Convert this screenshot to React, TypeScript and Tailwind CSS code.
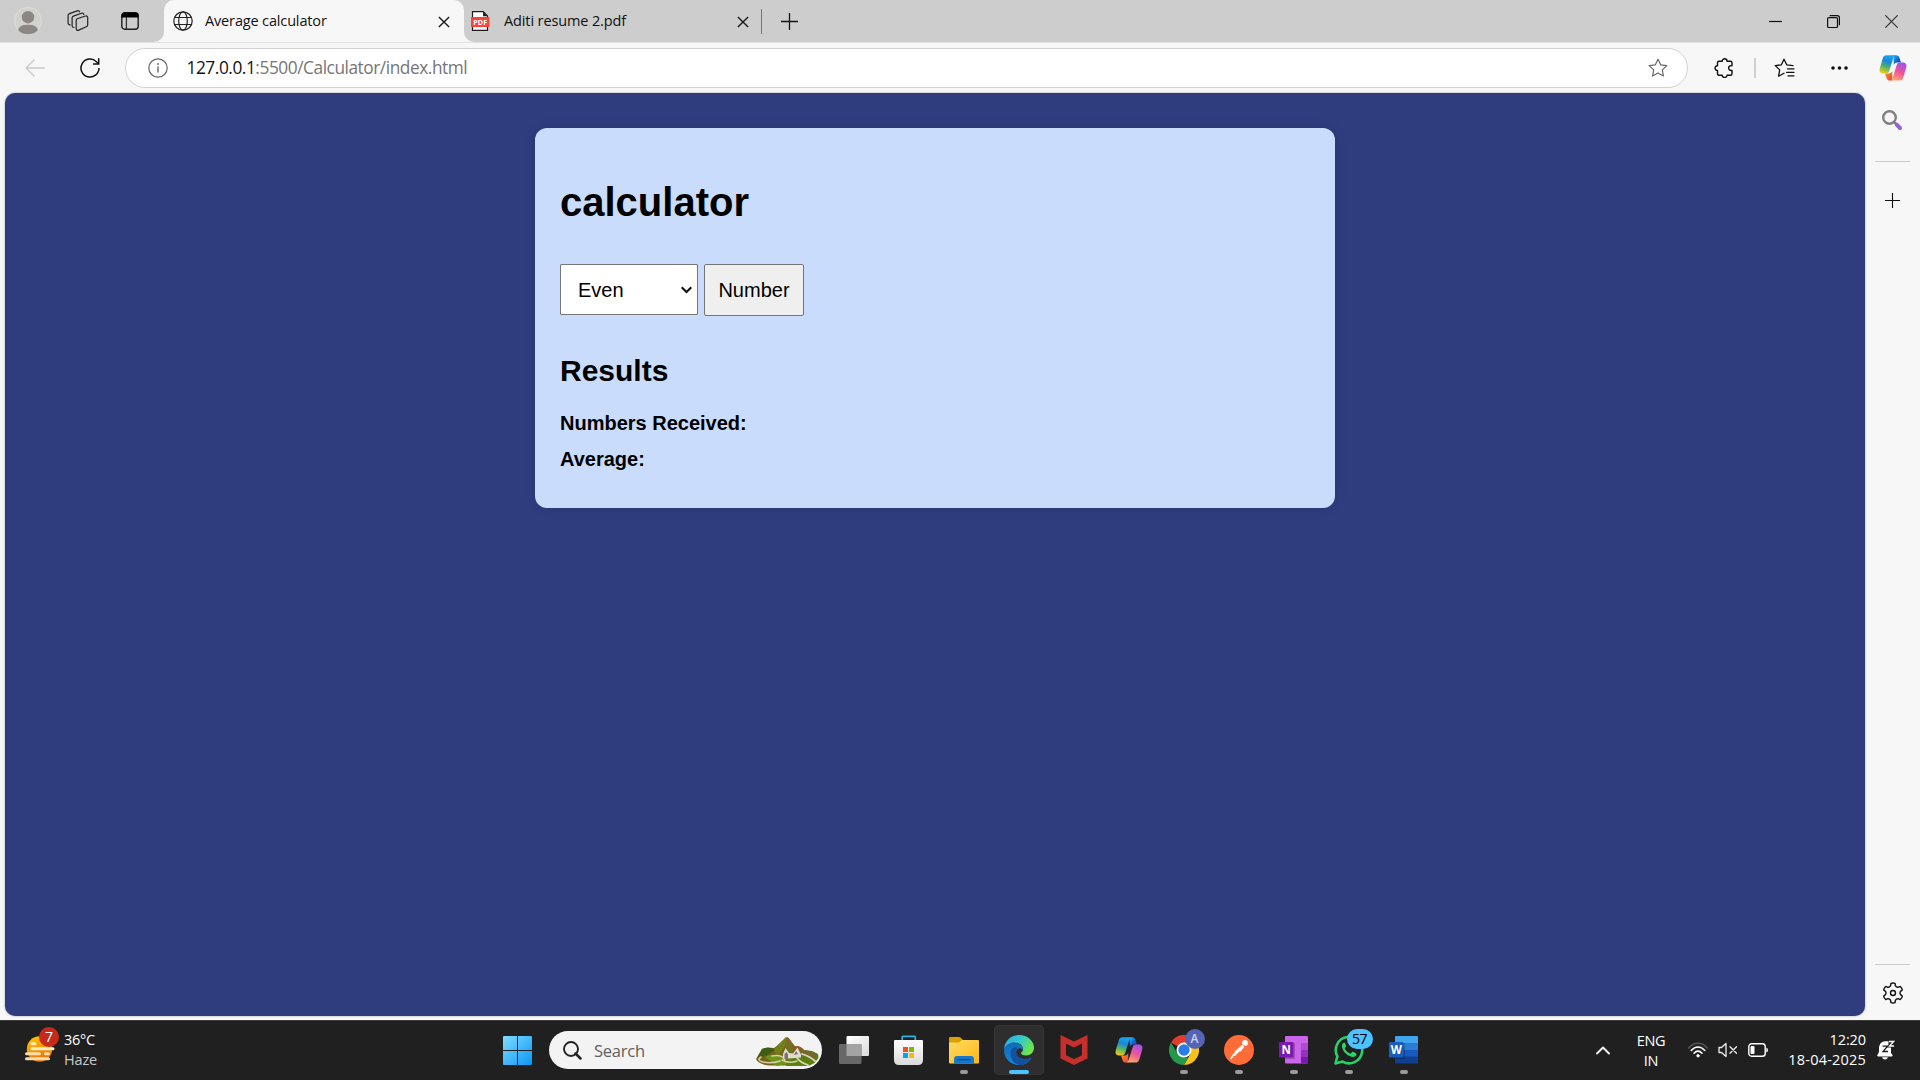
import React from "react";

const UI = "font-['Open_Sans','Noto_Sans',sans-serif]";

function Close({ className = "" }: { className?: string }) {
  return (
    <svg width="12" height="12" viewBox="0 0 12 12" className={"shrink-0 " + className} fill="none" stroke="#1a1a1a" strokeWidth="1.400">
      <path d="M.9.9 11.1 11.1M11.1.9.9 11.1" />
    </svg>
  );
}

function Plus({ size, className = "" }: { size: number; className?: string }) {
  return (
    <svg width={size} height={size} viewBox="0 0 17 17" className={"shrink-0 " + className} fill="none" stroke="#111" strokeWidth="1.3">
      <path d="M8.5 0v17M0 8.5h17" />
    </svg>
  );
}

function Copilot({ id, className = "" }: { id: string; className?: string }) {
  return (
    <svg width="28" height="26" viewBox="0 0 28 26" className={"shrink-0 " + className}>
      <defs>
        <linearGradient id={id + "a"} x1="0.6" y1="0" x2="0.3" y2="1">
          <stop offset="0" stopColor="#19a9f4" />
          <stop offset=".35" stopColor="#1b86d8" />
          <stop offset=".65" stopColor="#4fb56a" />
          <stop offset="1" stopColor="#f2cb12" />
        </linearGradient>
        <linearGradient id={id + "b"} x1="0.7" y1="0" x2="0.3" y2="1">
          <stop offset="0" stopColor="#a052ee" />
          <stop offset=".5" stopColor="#ee5498" />
          <stop offset="1" stopColor="#ffa96b" />
        </linearGradient>
        <linearGradient id={id + "c"} x1="0" y1="0" x2="1" y2="1">
          <stop offset="0" stopColor="#25b6f6" />
          <stop offset=".6" stopColor="#1556c8" />
          <stop offset="1" stopColor="#1640b4" />
        </linearGradient>
        <linearGradient id={id + "d"} x1="0" y1="0" x2="1" y2="1">
          <stop offset="0" stopColor="#f6a21c" />
          <stop offset="1" stopColor="#ea3e3e" />
        </linearGradient>
      </defs>
      <path d="M14.5.3h2.6c1.900 0 2.800.9 3.400 2.600l1.500 4.600h-3.600c-2 0-3 .8-3.600 2.600Z" fill={`url(#${id}c)`} />
      <path d="M13.400 25.600h-2.500c-1.900 0-2.800-.9-3.400-2.600L6 18.400h3.600c2 0 3-.8 3.600-2.600Z" fill={`url(#${id}d)`} />
      <path d="M7.600.3h9.300c-1.400.2-2 1-2.500 2.500l-4.100 13c-.6 1.800-1.600 2.600-3.500 2.600H4C1 18.400 0 16 .8 13.200L3.700 3.400C4.300 1.300 5.400.3 7.600.3Z" fill={`url(#${id}a)`} />
      <path d="M20.400 25.600h-9.300c1.400-.2 2-1 2.500-2.500l4.100-13c.6-1.800 1.600-2.600 3.500-2.600H24c3 0 4 2.400 3.200 5.200l-2.900 9.800c-.6 2.100-1.700 3.100-3.900 3.100Z" fill={`url(#${id}b)`} />
    </svg>
  );
}

const STAR = "M10 1.200l2.650 5.600 6.150.85-4.500 4.250 1.100 6.100L10 15.050 4.600 18l1.100-6.100L1.200 7.650l6.150-.85Z";

function gearOutline(c: number) {
  const pt = (r: number, deg: number) => {
    const a = (deg * Math.PI) / 180;
    return `${(c + r * Math.sin(a)).toFixed(2)} ${(c - r * Math.cos(a)).toFixed(2)}`;
  };
  let d = "";
  for (let t = 0; t < 360; t += 60) {
    d += `${t === 0 ? "M" : "L"}${pt(9.8, t - 12)}Q${pt(10.3, t)} ${pt(9.8, t + 12)}L${pt(7.700, t + 18)}Q${pt(6.500, t + 30)} ${pt(7.700, t + 42)}`;
  }
  return d + "Z";
}

function TabStrip() {
  return (
    <div className="flex h-[42px] shrink-0 bg-[#f7f7f7]">
      <div className="flex w-[164px] items-center rounded-br-[10px] bg-[#cdcdcd]">
        <svg width="28" height="28" viewBox="0 0 28 28" className="ml-[14px]">
          <circle cx="14" cy="14" r="13.300" fill="#d2d1ce" stroke="#dedbd5" strokeWidth="1.200" />
          <circle cx="14" cy="10.200" r="6.200" fill="#8b8785" />
          <path d="M4 23c1.500-4 5-5.200 10-5.200S22.500 19 24 23c-2.500 3-6 4.300-10 4.300S6.500 26 4 23Z" fill="#8b8785" />
        </svg>
        <svg width="22" height="22" viewBox="0 0 22 22" className="ml-[25px]" fill="none" stroke="#222" strokeWidth="1.200" strokeLinejoin="round" strokeLinecap="round">
          <path d="M10.200 8.700 18.500 6c1.300-.4 2.200.3 2.200 1.500v7.300c0 1-.4 1.700-1.400 2l-7.600 3.300c-1.400.6-2.500 0-2.500-1.500v-8c0-1 .1-1.600 1-1.900Z" />
          <path d="M7 17.500c-1.200 0-1.900-.5-1.900-1.800V8c0-1 .4-1.500 1.300-1.900l8-2.800c1.200-.4 2 0 2.400 1.200" />
          <path d="M3.200 14.800c-1.300 0-2.100-.5-2.100-1.800V5.600c0-1 .4-1.600 1.400-2l7.700-2.700c1.100-.4 2 0 2.400 1" />
        </svg>
        <svg width="18" height="18" viewBox="0 0 18 18" className="ml-8" fill="none">
          <rect x=".8" y=".8" width="16.400" height="16.400" rx="3" stroke="#1d1d1d" strokeWidth="1.400" />
          <path d="M.5 5.500V3.500a3 3 0 0 1 3-3h11a3 3 0 0 1 3 3v2Z" fill="#000" />
          <path d="M5.400 5v12" stroke="#333" strokeWidth="1.300" />
        </svg>
      </div>
      <div className="w-[300px] bg-[linear-gradient(#cdcdcd_12px,#f7f7f7_12px)]">
        <div className="flex h-full items-center rounded-t-[10px] bg-[#f7f7f7]">
          <svg width="20" height="20" viewBox="0 0 20 20" className="ml-[9px]" fill="none" stroke="#222" strokeWidth="1.200">
            <circle cx="10" cy="10" r="9.200" />
            <ellipse cx="10" cy="10" rx="4.300" ry="9.200" />
            <path d="M1.700 6.500h16.600M1.700 13.500h16.600" />
          </svg>
          <span className={UI + " ml-3 w-[226px] text-[14.500px] leading-5 tracking-[-0.15px] text-[#111]"}>Average calculator</span>
          <Close className="mt-[2px] ml-[7px]" />
        </div>
      </div>
      <div className="flex flex-1 items-center rounded-bl-[10px] bg-[#cdcdcd]">
        <svg width="20" height="20" viewBox="0 0 20 20" className="ml-[6px]">
          <path d="M2.500.7h10.700l4.300 4.300v14.300h-15Z" fill="#fff" stroke="#1b1b1b" strokeWidth="1.200" />
          <path d="M13 .5v4.700h4.700Z" fill="#222" />
          <rect x="1" y="6" width="18.500" height="10" rx=".8" fill="#fb4243" />
          <text x="10.200" y="13.700" textAnchor="middle" fontSize="7.200" fontWeight="700" fill="#fff" fontFamily="Open Sans, sans-serif">PDF</text>
        </svg>
        <span className={UI + " ml-[14px] w-[226px] text-[14.500px] leading-5 tracking-[-0.12px] text-[#111]"}>Aditi resume 2.pdf</span>
        <Close className="mt-[2px] ml-[7px]" />
        <div className="ml-3 h-[25px] w-px bg-[#777]" />
        <Plus size={17} className="ml-[19px]" />
        <div className="flex-1" />
        <svg width="13" height="13" viewBox="0 0 13 13" stroke="#111" strokeWidth="1.200"><path d="M0 6.500h13" /></svg>
        <svg width="13" height="13" viewBox="0 0 13 13" className="ml-[45px] mt-[1px]" fill="none" stroke="#111" strokeWidth="1.200">
          <rect x=".6" y="2.600" width="9.900" height="9.900" rx="1.300" />
          <path d="M2.700.6h7.500c1.400 0 2.200.8 2.200 2.200v7.500" />
        </svg>
        <svg width="13" height="13" viewBox="0 0 13 13" className="mr-[22px] ml-[45px] mt-[1px]" fill="none" stroke="#333" strokeWidth="1.200"><path d="M.3.3l12.400 12.400M12.700.3.300 12.700" /></svg>
      </div>
    </div>
  );
}

function Toolbar() {
  return (
    <div className="flex h-[51px] shrink-0 items-center border-t border-[#e2e2e2] bg-[#f7f7f7]">
      <svg width="20" height="18" viewBox="0 0 20 18" className="ml-[25px]" fill="none" stroke="#c9c9c9" strokeWidth="1.300"><path d="M20 9H1M9.500.5 1 9l8.500 8.500" /></svg>
      <svg width="20" height="20" viewBox="0 0 20 20" className="ml-[35px]" fill="none" stroke="#111" strokeWidth="1.500">
        <path d="M19 10a9 9 0 1 1-2.600-6.300L18.300 5.500" /><path d="M18.700.3v5.600h-5.600" />
      </svg>
      <div className="ml-[25px] flex h-10 w-[1563px] items-center rounded-full border border-[#d2d2d2] bg-white">
        <svg width="20" height="20" viewBox="0 0 20 20" className="ml-[21.500px]" fill="none" stroke="#666" strokeWidth="1.200">
          <circle cx="10" cy="10" r="9.200" /><path d="M10 8.600v6" strokeWidth="1.400" /><circle cx="10" cy="6" r=".9" fill="#666" stroke="none" />
        </svg>
        <span className={UI + " ml-[19px] text-[17.300px] leading-6 tracking-[-0.450px] whitespace-nowrap text-[#767676]"}><span className="text-[#111]">127.0.0.1</span>:5500/Calculator/index.html</span>
        <div className="flex-1" />
        <svg width="20" height="20" viewBox="0 0 20 20" className="mr-[19.500px]" fill="none" stroke="#666" strokeWidth="1.200" strokeLinejoin="round"><path d={STAR} /></svg>
      </div>
      <svg width="20" height="20" viewBox="0 0 20 20" className="ml-[26px]" fill="none" stroke="#111" strokeWidth="1.400" strokeLinejoin="round">
        <path d="M8.200 3.200C8.200 0 13 0 13 3.200h3.500c.9 0 1.500.6 1.500 1.500v3c-4.500-1-4.500 5.600 0 4.700v3.300c0 .9-.6 1.500-1.500 1.500H13c0 3-4.800 3-4.800 0H5c-.9 0-1.500-.6-1.500-1.500v-3.200c-3.300 0-3.300-4.800 0-4.800v-3c0-.9.6-1.500 1.500-1.500Z" />
      </svg>
      <div className="ml-5 h-5 w-[2px] bg-[#d0d0d0]" />
      <svg width="21" height="20" viewBox="0 0 21 20" className="ml-[18px]" fill="none" stroke="#111" strokeWidth="1.300" strokeLinejoin="round" strokeLinecap="round">
        <path d="M19 7.600 12.700 6.800 10 1.200 7.400 6.800l-6.200.85 4.500 4.250L4.600 18.200l5.400-3" /><path d="M13.500 10.800h6.500M12.500 14.300H20M14 17.800h6" />
      </svg>
      <svg width="17" height="4" viewBox="0 0 17 4" className="ml-9" fill="#111"><circle cx="2" cy="2" r="1.800" /><circle cx="8.500" cy="2" r="1.800" /><circle cx="15" cy="2" r="1.800" /></svg>
      <Copilot id="top" className="ml-[31px]" />
    </div>
  );
}

function Page() {
  return (
    <main className="ml-[5px] h-[922.500px] w-[1860px] rounded-[10px] bg-[#2f3c7e] pt-[35px] font-['Liberation_Sans',Arial,sans-serif] text-black shadow-[0_0_2px_#0006]">
      <section className="mx-auto h-[380px] w-[800px] rounded-[12px] bg-[#cadcfc] px-[25px] pt-[51px] shadow-[0_0_12px_#0000001a]">
        <h1 className="text-[40px] leading-[46px] font-bold">calculator</h1>
        <div className="mt-[39px] flex gap-[6px] text-[20px]">
          <div className="flex h-[51px] w-[138px] items-center justify-between rounded-[1px] border border-[#767676] bg-white pr-[5px] pl-[17px]">
            <span className="leading-6">Even</span>
            <svg width="11" height="8" viewBox="0 0 11 8" fill="none" stroke="#111" strokeWidth="2.100"><path d="M.7 1.200 5.500 6l4.800-4.800" /></svg>
          </div>
          <button className="h-[52px] w-[100px] rounded-[2px] border border-[#767676] bg-[#efefef] leading-6">Number</button>
        </div>
        <h2 className="mt-[37px] text-[30px] leading-[35px] font-bold">Results</h2>
        <p className="mt-[17px] text-[20px] leading-9 font-bold">Numbers Received:</p>
        <p className="text-[20px] leading-9 font-bold">Average:</p>
      </section>
    </main>
  );
}

function Sidebar() {
  return (
    <aside className="flex h-[927px] flex-1 flex-col items-center">
      <svg width="22" height="22" viewBox="0 0 22 22" className="mt-4 mr-px" fill="none">
        <circle cx="8.500" cy="8.500" r="6.300" stroke="#808080" strokeWidth="2.400" />
        <path d="m13 13 3.300 3.300" stroke="#777" strokeWidth="2.200" />
        <path d="m15.700 15.700 3.300 3.300" stroke="#9560d2" strokeWidth="4" strokeLinecap="round" />
      </svg>
      <div className="mt-[30px] h-px w-[35px] bg-[#cbcbcb]" />
      <Plus size={15} className="mt-[31px]" />
      <div className="flex-1" />
      <div className="h-px w-[35px] bg-[#cbcbcb]" />
      <svg width="22" height="22" viewBox="0 0 22 22" className="mt-[17px] mb-4" fill="none" stroke="#111" strokeWidth="1.400" strokeLinejoin="round">
        <circle cx="11" cy="11" r="2.500" />
        <path d={gearOutline(11)} />
      </svg>
    </aside>
  );
}

function TaskItem({ children, running = false, active = false }: { children: React.ReactNode; running?: boolean; active?: boolean }) {
  return (
    <div className="flex w-[55px] justify-center">
      <div className={"relative flex h-[50px] w-[50px] items-center justify-center rounded-[5px] " + (active ? "bg-[#2e2e2e] ring-1 ring-[#363636] ring-inset" : "")}>
        {children}
        {active && <div className="absolute bottom-[1px] left-[15px] h-1 w-5 rounded-full bg-[#4cc2ff]" />}
        {running && <div className="absolute bottom-[1px] left-[21px] h-1 w-2 rounded-full bg-[#9a9a9a]" />}
      </div>
    </div>
  );
}

function OfficeIcon({ letter, word = false }: { letter: string; word?: boolean }) {
  const c = word ? ["#41a5ee", "#2b7cd3", "#185abd", "#103f91", "#1a5cbe"] : ["#ca64ea", "#ae4bd5", "#9332bf", "#7719aa", "#7a1bad"];
  return (
    <svg width="30" height="30" viewBox="0 0 30 30">
      {word ? (
        <g>
          <rect x="6" y="1" width="23" height="27.500" rx="1" fill={c[3]} />
          <path d="M6 14.500h23v7H6Z" fill={c[2]} /><path d="M6 8h23v7H6Z" fill={c[1]} /><path d="M7 1h21q1 0 1 1v6H6V2q0-1 1-1Z" fill={c[0]} />
        </g>
      ) : (
        <g>
          <rect x="6" y="1" width="23" height="27.500" rx="1" fill={c[0]} />
          <path d="M22 8h7v7h-7Z" fill={c[1]} /><path d="M22 15h7v7h-7Z" fill={c[2]} /><path d="M22 22h7v5.500q0 1-1 1h-6Z" fill={c[3]} />
        </g>
      )}
      <rect x="6" y="8" width="10" height="16" rx="1" fill="#000" opacity=".2" />
      <rect x="0" y="7" width="14.500" height="15.500" rx="1.300" fill={c[4]} />
      <text x="7.200" y="19" textAnchor="middle" fontSize="11.500" fontWeight="700" fill="#fff" fontFamily="Open Sans, sans-serif">{letter}</text>
    </svg>
  );
}

function Taskbar() {
  return (
    <footer className={UI + " flex h-[60px] shrink-0 items-center border-t border-[#3c3c3c] bg-[#202020] pb-px text-white"}>
      <div className="relative ml-[25px] h-[30px] w-[30px]">
        <svg width="30" height="30" viewBox="0 0 30 30">
          <defs><linearGradient id="sun" x1="0" y1="0" x2="0.300" y2="1"><stop stopColor="#ffca08" /><stop offset="1" stopColor="#f0700e" /></linearGradient></defs>
          <circle cx="14.500" cy="14" r="12.700" fill="url(#sun)" />
          <g stroke="#f9dfa5" strokeWidth="3" strokeLinecap="round"><path d="M7 8.700h3M7 13.700h21" stroke="#fff0bd" /><path d="M1.500 18.700h13M20.500 18.700h3M1.500 23.700h22" /></g>
        </svg>
        <div className="absolute -top-[8px] left-[14px] flex h-5 w-5 items-center justify-center rounded-full bg-[#c42b1c] text-[14px] leading-none">7</div>
      </div>
      <div className="ml-[9px] w-[100px] text-[14.500px] leading-5 tracking-[-0.15px]">
        <p className="tracking-[-0.25px]">36°C</p><p className="text-[#c9c9c9]">Haze</p>
      </div>
      <svg width="29" height="29" viewBox="0 0 29 29" className="ml-[339px]">
        <defs><linearGradient id="win" gradientUnits="userSpaceOnUse" x1="0" y1="0" x2="29" y2="29"><stop stopColor="#7fdcff" /><stop offset="1" stopColor="#0b96f5" /></linearGradient></defs>
        <path d="M1 0h13v14H0V1q0-1 1-1ZM15 0h13q1 0 1 1v13H15ZM0 15h14v14H1q-1 0-1-1ZM15 15h14v13q0 1-1 1H15Z" fill="url(#win)" />
      </svg>
      <div className="ml-[17px] flex h-[38px] w-[273px] items-center rounded-full bg-[#f3f3f3]">
        <svg width="19" height="19" viewBox="0 0 19 19" className="ml-[14px]" fill="none" stroke="#222" strokeWidth="1.900"><circle cx="8" cy="8" r="7" /><path d="m12.500 12.500 5 5" strokeWidth="2.500" strokeLinecap="round" /></svg>
        <span className="mt-px ml-3 text-[16.500px] leading-6 tracking-[-0.250px] text-[#5f5f5f]">Search</span>
        <div className="flex-1" />
        <svg width="64" height="30" viewBox="0 0 64 30" className="mt-1 mr-[2px]">
          <defs>
            <linearGradient id="hill" x1="0" y1="0" x2="1" y2="0.500"><stop stopColor="#4c5f14" /><stop offset=".5" stopColor="#7a641b" /><stop offset="1" stopColor="#5b7f10" /></linearGradient>
            <linearGradient id="peak" x1="0" y1="0" x2="0" y2="1"><stop stopColor="#91602a" /><stop offset="1" stopColor="#5c7d15" /></linearGradient>
          </defs>
          <path d="M0 22 3.500 16 6 12l5-1.500 7 .5 4-3L29 1.500q2-2.500 4 0L37 7l4 4 3-1 3 3 9 1 6 3 .5 4-4 5-5 2.500H13Q2 27 0 22Z" fill="url(#hill)" />
          <path d="M17 13 30 0q2 6-3 12l-5 6Z" fill="#71801c" />
          <path d="M31 0q8 7 8 13l-12 5q4-9 4-18Z" fill="url(#peak)" />
          <path d="M36 8q3 2 5 1 4 0 8 5l-11 1Z" fill="#8a5c22" />
          <path d="M6 12q8-3 13 1l-8 5-9 3Z" fill="#3f5d12" />
          <path d="M9 20q10-5 17 1l9 5-14 3Z" fill="#6d9518" />
          <path d="M44 13q12 0 18 5l-4 4-14-4Z" fill="#76682a" />
          <path d="M32 22q12-3 24 3l-6 4H30Z" fill="#5a8212" />
          <path d="M16 19q10-2 13 4M5 20q-5 3 2 5 8 2 17-1M26 23q7 4 15 1" stroke="#d9cfa8" strokeWidth="1.500" fill="none" strokeLinecap="round" />
          <path d="M41 21q4 5 11 7M46 17q9 3 13 7" stroke="#ded5b9" strokeWidth="1.800" fill="none" strokeLinecap="round" />
          <path d="M27 22v-5l2.500-6 3.500 5 4 .5 4.500-6 3.500 7v3Z" fill="#dedbd1" />
          <path d="M28.500 22v-5l2-2 1.500 2.500V22ZM38 18l2-4 2 3Z" fill="#7b716b" />
        </svg>
      </div>
      <div className="ml-[4px] flex">
        <TaskItem>
          <svg width="30" height="30" viewBox="0 0 30 30">
            <defs><linearGradient id="tv" x1="0" y1="0" x2="1" y2="1"><stop stopColor="#fff" /><stop offset="1" stopColor="#dadada" /></linearGradient></defs>
            <rect x="7.500" y="1" width="22.500" height="20" rx="1" fill="url(#tv)" /><rect x="0" y="9" width="22.500" height="20" rx="1" fill="#686868" /><path d="M7.500 9h15v12h-15Z" fill="#a3a3a3" />
          </svg>
        </TaskItem>
        <TaskItem>
          <svg width="30" height="30" viewBox="0 0 30 30">
            <defs><linearGradient id="st" x1="0" y1="0" x2="0" y2="1"><stop stopColor="#fff" /><stop offset="1" stopColor="#dadada" /></linearGradient></defs>
            <path d="M8.200 6V2q0-.7.7-.7h11.700q.7 0 .7.700v4" fill="none" stroke="#25b3e8" strokeWidth="1.700" />
            <path d="M1 5h27q1 0 1 1v19q0 5-5 5H5q-5 0-5-5V6q0-1 1-1Z" fill="url(#st)" />
            <path d="M9 12h5v5H9Z" fill="#f25022" /><path d="M15 12h5v5h-5Z" fill="#7fba00" /><path d="M9 18h5v5H9Z" fill="#00a4ef" /><path d="M15 18h5v5h-5Z" fill="#ffb900" />
          </svg>
        </TaskItem>
        <TaskItem running>
          <svg width="30" height="30" viewBox="0 0 30 30">
            <defs><linearGradient id="fo" x1="0" y1="0" x2="1" y2="1"><stop stopColor="#ffdb68" /><stop offset="1" stopColor="#ffb910" /></linearGradient></defs>
            <path d="M0 10V3q0-1 1-1h9q1 0 1.700.7L14 5l-3 5Z" fill="#dda000" />
            <path d="M0 8.500q0-1 1-1h9L13 5h16q1 0 1 1v21.500q0 1-1 1H1q-1 0-1-1Z" fill="url(#fo)" />
            <path d="M5 28.500V24q0-3 3-3h14q3 0 3 3v4.500Z" fill="#1778cb" /><path d="M8.500 24.700h13" stroke="#084b91" strokeWidth="1.200" />
          </svg>
        </TaskItem>
        <TaskItem active>
          <svg width="30" height="30" viewBox="0 0 30 30">
            <defs>
              <linearGradient id="e1" x1="0" y1="0" x2="1" y2=".5"><stop stopColor="#2ba8e8" /><stop offset=".5" stopColor="#31c7cf" /><stop offset="1" stopColor="#6be64b" /></linearGradient>
              <linearGradient id="e2" x1="0" y1="0" x2=".4" y2="1"><stop stopColor="#1466b4" /><stop offset="1" stopColor="#0f8be0" /></linearGradient>
            </defs>
            <path d="M0 15C0 9 5 7.500 10 7.500c5 0 9 2.500 9 7.500-2-3-7-2-7 2.500 0 5 7 8.500 15.500 5.500C25 27.500 20.500 30 15 30 6.500 30 0 23.500 0 15Z" fill="url(#e2)" />
            <path d="M10.500 12c-4 2-5 6-3.500 10.500C8.500 27 12.500 30 16 30c5 0 9-2.500 11.500-6.500.5-.9-.2-1.200-1-.8-7 3.500-14.500 0-14.500-5.700 0-2 .8-3.400 2-4.500Z" fill="#1252a1" />
            <path d="M.1 14C.8 6 7 0 15 0c9 0 15 6.500 15 12.500 0 5-3.500 8-8 8-3.500 0-5-1.500-5-2.500s2.500-1.500 2-4.500C18.500 10 15 7.500 10.500 7.500 5.500 7.500 1.500 10 .1 14Z" fill="url(#e1)" />
          </svg>
        </TaskItem>
        <TaskItem>
          <svg width="28" height="30" viewBox="0 0 28 30"><path d="M.5 0 14 6.500 27.500 0v23.500L14 30 .5 23.500ZM6 8.500v11.700l8 4 8-4V8.500l-8 4Z" fill="#c62f2b" fillRule="evenodd" /></svg>
        </TaskItem>
        <TaskItem><Copilot id="bar" /></TaskItem>
        <TaskItem running>
          <svg width="30" height="30" viewBox="0 0 30 30">
            <path d="M15 15 2 7.500A15 15 0 0 1 28 7.500Z" fill="#e33b2e" />
            <path d="M15 7.500h13A15 15 0 0 1 15 30l6.500-11.300Z" fill="#fbc116" /><path d="M2 7.500 8.500 18.700 15 22.500h4.300L15 30A15 15 0 0 1 2 7.500Z" fill="#229a49" />
            <circle cx="15" cy="15" r="7.500" fill="#fff" /><circle cx="15" cy="15" r="5.700" fill="#287de9" />
          </svg>
          <div className="absolute top-[4px] left-[26px] flex h-5 w-5 items-center justify-center rounded-full bg-[#5664b6] text-[12px] leading-none font-semibold text-[#cdd4f6]">A</div>
        </TaskItem>
        <TaskItem running>
          <svg width="30" height="30" viewBox="0 0 30 30">
            <circle cx="15" cy="15" r="15" fill="#ff6c37" />
            <circle cx="21" cy="8" r="2.900" fill="#fff" />
            <path d="m19 10.500-7.500 6.500M18 12.500 10.500 20" stroke="#fff" strokeWidth="1.900" strokeLinecap="round" /><path d="m10.500 18.500-3.500 5" stroke="#fff" strokeWidth="1.500" strokeLinecap="round" /><path d="m20 11.500-4 5" stroke="#fff" strokeWidth="1.200" />
            <path d="m18.500 9.500 2.500 2" stroke="#ff6c37" strokeWidth=".7" />
          </svg>
        </TaskItem>
        <TaskItem running><OfficeIcon letter="N" /></TaskItem>
        <TaskItem running>
          <svg width="30" height="30" viewBox="0 0 30 30" fill="none">
            <path d="M1.500 28.500 3.400 21.400A13.200 13.200 0 1 1 8.500 26.600Z" stroke="#25d366" strokeWidth="2.600" strokeLinejoin="round" />
            <path d="M10.500 7.500c-2 .3-3 2.200-2.500 4.500 1 5 5.500 9.200 10.500 10 2 .2 3.800-1 4-3 0-.7-3.700-2.500-4.200-2.200l-1.600 2c-3-1-4.900-2.900-6-5.500l1.500-1.800c.2-.5-1.100-3.800-1.700-4Z" fill="#25d366" />
          </svg>
          <div className="absolute top-[4px] left-[23px] flex h-5 w-[26px] items-center justify-center rounded-full bg-[#4cc2ff] text-[14px] leading-none tracking-[-0.5px] text-black">57</div>
        </TaskItem>
        <TaskItem running><OfficeIcon letter="W" word /></TaskItem>
      </div>
      <div className="flex-1" />
      <svg width="14" height="9" viewBox="0 0 14 9" fill="none" stroke="#f2f2f2" strokeWidth="1.900" strokeLinecap="round" strokeLinejoin="round"><path d="m1 7.500 6-6 6 6" /></svg>
      <div className="ml-[19px] w-11 pt-px text-center text-[14.500px] leading-5 tracking-[-0.3px]"><p>ENG</p><p>IN</p></div>
      <svg width="20" height="16" viewBox="0 0 20 16" className="ml-[15px]" fill="none" stroke="#fff" strokeWidth="1.600" strokeLinecap="round">
        <path d="M.8 6c5-6.300 13.400-6.300 18.400 0" stroke="#555" /><path d="M3.200 8.500c4-4.700 9.600-4.700 13.600 0M6 11.200c2.600-2.800 5.400-2.800 8 0" /><circle cx="10" cy="13.800" r="1.200" fill="#fff" strokeWidth="1" />
      </svg>
      <svg width="20" height="16" viewBox="0 0 20 16" className="ml-[10px]" fill="none" stroke="#eee" strokeWidth="1.300" strokeLinejoin="round" strokeLinecap="round"><path d="M1 5.500h2.500L8 1.500v13l-4.500-4H1ZM12 4.800l6.500 6.500M18.500 4.800 12 11.300" /></svg>
      <svg width="20" height="14" viewBox="0 0 20 14" className="ml-[10px]" fill="none"><rect x=".8" y=".8" width="16.400" height="12.400" rx="2.800" stroke="#fff" strokeWidth="1.400" /><rect x="2.500" y="3" width="4" height="8" rx="1" fill="#fff" /><path d="M18.300 4.500q1.700.5 1.700 2.500t-1.700 2.500Z" fill="#fff" /></svg>
      <div className="ml-3 w-[86px] text-right text-[14.500px] leading-5 tracking-[0.2px] whitespace-nowrap"><p className="tracking-[-0.1px]">12:20</p><p>18-04-2025</p></div>
      <svg width="18" height="20" viewBox="0 0 18 20" className="mr-[25px] ml-[11px]">
        <path d="M2 8a6 6.500 0 0 1 6-6.800h3.500V6H14v7l1.500 2q.4 1.500-1 1.500H1.200q-1.400-.2-.8-1.500L2 12Z" fill="#fff" />
        <path d="M5 17.300h6q-.7 2.200-3 2.200t-3-2.200Z" fill="#fff" />
        <path d="M5.500 6.200h5L6 11.500h5" stroke="#202020" strokeWidth="1.300" fill="none" />
        <path d="M12 1.200h4.800L12.500 6h4.500" stroke="#202020" strokeWidth="3.200" fill="none" />
        <path d="M12 1.500h4.600L12.500 6h4.500" stroke="#fff" strokeWidth="1.300" fill="none" />
      </svg>
    </footer>
  );
}

export default function App() {
  return (
    <div className="flex h-[1080px] w-[1920px] flex-col overflow-hidden bg-[#f7f7f7]">
      <TabStrip />
      <Toolbar />
      <div className="flex h-[927px] shrink-0">
        <Page />
        <Sidebar />
      </div>
      <Taskbar />
    </div>
  );
}
